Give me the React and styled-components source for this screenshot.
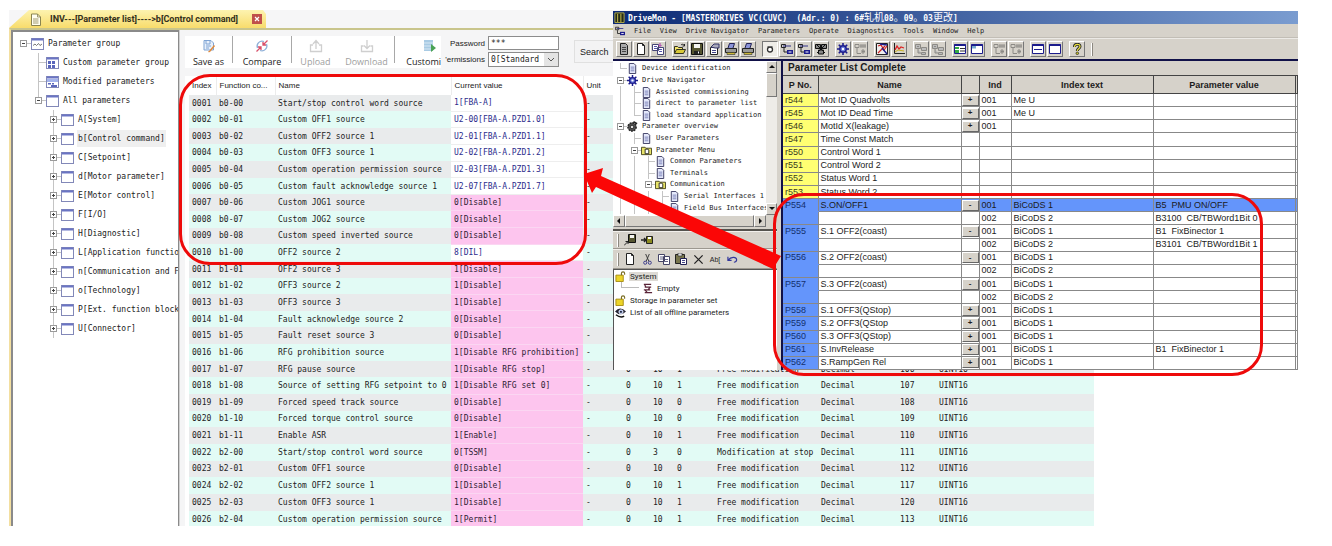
import React from "react";
import styled, { createGlobalStyle, css } from "styled-components";

const mono = `"DejaVu Sans Mono", "Liberation Mono", "Noto Sans CJK SC", monospace`;
const sans = `"Liberation Sans", Arial, sans-serif`;
const ui = `"Open Sans", "Noto Sans", sans-serif`;

const Global = createGlobalStyle`
  * { box-sizing: border-box; }
  body { margin: 0; background: #fff; color: #222; font-family: ${mono}; font-size: 8px; }
  button, input, select { font: inherit; color: inherit; margin: 0; padding: 0; border-radius: 0; }
  table { border-collapse: collapse; table-layout: fixed; width: 100%; height: 100%; }
  th, td { padding: 0; text-align: left; font-weight: normal; overflow: hidden; white-space: nowrap; }
  svg { display: block; flex: none; }
`;

const Page = styled.div`
  position: relative;
  display: flex;
  height: 100vh;
  min-height: 500px;
  min-width: 1100px;
  padding: 10px 238px 20px 9px;
`;

/* ---------- parameter list window ---------- */

const ListWindow = styled.section`
  flex: 1;
  min-width: 0;
  display: flex;
  flex-direction: column;
`;

const TabStrip = styled.header`
  display: flex;
  height: 18px;
  background: #f6f6f7;
`;

const Tab = styled.div`
  display: flex;
  align-items: center;
  width: 257px;
  height: 18px;
  padding-left: 21px;
  background: linear-gradient(#fdf3b0, #f8dc6c);
  clip-path: polygon(20px 0, 254px 0, 257px 4px, 257px 100%, 0 100%);
  font: bold 9px Roboto, ${ui};
  color: #33301c;
  white-space: nowrap;
`;

const TabTitle = styled.span`
  flex: 1;
  padding-left: 8px;
`;

const TabClose = styled.button`
  width: 10px;
  height: 10px;
  margin-right: 4px;
  border: 0;
  background: #c0504a;
  color: #fff;
  display: grid;
  place-items: center;
`;

const Body = styled.div`
  flex: 1;
  min-height: 0;
  display: flex;
  border-top: 2px solid #c9c58c;
  border-left: 2px solid #f3dfa0;
`;

const TreePanel = styled.nav`
  width: 168px;
  flex: none;
  overflow: hidden;
  padding: 2px 0 0 3px;
  border: solid #8a8a8a;
  border-width: 2px 1px 0 2px;
  background: #fff;
`;

const TreeRow = styled.div`
  display: flex;
  align-items: center;
  height: ${(p) => (p.$fill ? "100%" : "19px")};
  min-height: 0;
  white-space: nowrap;
`;

const TreeLabel = styled.span`
  margin-left: 3px;
  padding: 0 1px;
  line-height: ${(p) => (p.$tight ? "11px" : "17px")};
  background: ${(p) => (p.$on ? "#efefef" : "none")};
`;

const bars = {
  v: css`linear-gradient(#c4c4c4, #c4c4c4) 50% 0 / 1px 100% no-repeat`,
  h: css`linear-gradient(#c4c4c4, #c4c4c4) 100% 50% / 50% 1px no-repeat`,
  half: css`linear-gradient(#c4c4c4, #c4c4c4) 50% 0 / 1px 50% no-repeat`,
};

const Guide = styled.span`
  width: ${(p) => p.$w}px;
  align-self: stretch;
  flex: none;
  display: grid;
  place-items: center;
  background: ${(p) =>
    ({
      v: bars.v,
      b: css`${bars.v}, ${bars.h}`,
      "-": bars.h,
      "+": css`${bars.v}, ${bars.h}`,
      e: css`${bars.half}, ${bars.h}`,
      t: css`${bars.half}, ${bars.h}`,
    })[p.$kind] || "none"};
`;

const Expander = styled.button`
  width: 7px;
  height: 7px;
  border: 0;
  background: none;
`;

function Guides({ code, w }) {
  return [...code].map((c, i) => (
    <Guide key={i} $kind={c} $w={w}>
      {(c === "-" || c === "+" || c === "t") && (
        <Expander aria-label={c === "+" ? "Expand" : "Collapse"}>
          <svg width="7" height="7" viewBox="0 0 7 7">
            <rect x=".5" y=".5" width="6" height="6" fill="#fff" stroke="#9a9a9a" />
            <path d={c === "+" ? "M2 3.5h3M3.5 2v3" : "M2 3.5h3"} stroke="#444" />
          </svg>
        </Expander>
      )}
    </Guide>
  ));
}

function WindowIcon({ kind }) {
  return (
    <svg width="13" height="12" viewBox="0 0 13 12">
      <rect x=".5" y=".5" width="12" height="11" fill="#fff" stroke="#8288b8" />
      <path d="M1 1.5h11" stroke="#6a74c4" strokeWidth="2" />
      {kind === "wave" && <path d="M2 7.5l2-1.5 1.500 1.500 2-2 1.500 2 2-1.500" fill="none" stroke="#555" strokeWidth=".8" />}
      {kind === "grid" && <path d="M2 4h3v3H2zM6 4h3v3H6zM2 8h3v3H2zM6 8h3v3H6z" fill="#5a66bc" />}
      {kind === "form" && (
        <>
          <path d="M1 3h11v3H1z" fill="#a4b4ec" />
          <path d="M2 7h3v1.500H2zM6 7h2v1.500H6zM5 9h6v2H5z" fill="#5a66bc" />
        </>
      )}
    </svg>
  );
}

const Main = styled.div`
  flex: 1;
  min-width: 0;
  display: flex;
  flex-direction: column;
  padding-left: 5px;
  border-left: 1px solid #d0d0d0;
  background: #f5f5f6;
`;

const Toolbar = styled.div`
  display: flex;
  align-items: flex-start;
  height: 46px;
  padding-top: 6px;
`;

const ToolGroup = styled.div`
  display: flex;
  height: 32px;
  background: #fff;
  font: 9px ${ui};
`;

const Tool = styled.button`
  width: ${(p) => p.$w}px;
  height: 32px;
  display: flex;
  flex-direction: column;
  align-items: ${(p) => (p.$end ? "flex-end" : "center")};
  justify-content: space-between;
  padding-top: 3px;
  border: 0;
  background: none;
  color: ${(p) => (p.$off ? "#a0a0a0" : "#222")};
  line-height: 13px;
  white-space: nowrap;
`;

const Divider = styled.i`
  width: 1px;
  height: 27px;
  background: #a8a8a8;
`;

const Access = styled.form`
  display: grid;
  grid-template-columns: 41px 71px;
  grid-template-rows: 14px 15px;
  row-gap: 2px;
  column-gap: 3px;
  margin-left: 3px;
  align-items: center;
  label { font: 8px ${sans}; text-align: right; white-space: nowrap; }
`;

const PasswordBox = styled.input`
  width: 71px;
  height: 14px;
  padding-left: 2px;
  border: 1px solid #8c8c8c;
  background: #fff;
`;

const SelectWrap = styled.div`
  display: flex;
  height: 15px;
  border: 1px solid #8c8c8c;
  background: #fff;
  select { flex: 1; min-width: 0; appearance: none; border: 0; padding-left: 2px; background: none; }
  svg { width: 14px; height: 13px; background: #e4e4e4; }
`;

const SearchButton = styled.button`
  width: 90px;
  height: 23px;
  margin: 4px 0 0 15px;
  padding-left: 5px;
  border: 1px solid #e0e0e0;
  background: #f3f3f4;
  font: 9px ${sans};
  text-align: left;
`;

const TableArea = styled.div`
  flex: 1;
  min-height: 0;
  overflow: hidden;
  padding-left: 4px;
  background: #fff;
  table { height: calc(100% + 2px); }
`;

const HeadCell = styled.th`
  height: 19px;
  && { padding-left: 3px; }
  font: 8px ${sans};
  border-right: ${(p) => (p.$last ? 0 : "1px solid #ececec")};
`;

const ParamRow = styled.tr`
  background: ${(p) => (p.$alt ? "#e2fbf5" : "#e9ebec")};
  td { padding-left: 3px; line-height: 15px; }
`;

const ValueCell = styled.td`
  background: ${(p) => (p.$own ? "#fff" : "#fdc5ee")};
  color: ${(p) => (p.$own ? "#2c2c8c" : "#2e1c34")};
  border-bottom: 1px solid ${(p) => (p.$own ? "#eee" : "#fbd6f2")};
`;

const F = "Free modification";
const PARAMS = [
  ["b0-00", "Start/stop control word source", "1[FBA-A]", 1],
  ["b0-01", "Custom OFF1 source", "U2-00[FBA-A.PZD1.0]", 1],
  ["b0-02", "Custom OFF2 source 1", "U2-01[FBA-A.PZD1.1]", 1],
  ["b0-03", "Custom OFF3 source 1", "U2-02[FBA-A.PZD1.2]", 1],
  ["b0-04", "Custom operation permission source", "U2-03[FBA-A.PZD1.3]", 1],
  ["b0-05", "Custom fault acknowledge source 1", "U2-07[FBA-A.PZD1.7]", 1],
  ["b0-06", "Custom JOG1 source", "0[Disable]"],
  ["b0-07", "Custom JOG2 source", "0[Disable]"],
  ["b0-08", "Custom speed inverted source", "0[Disable]"],
  ["b1-00", "OFF2 source 2", "8[DIL]", 1],
  ["b1-01", "OFF2 source 3", "1[Disable]"],
  ["b1-02", "OFF3 source 2", "1[Disable]"],
  ["b1-03", "OFF3 source 3", "1[Disable]"],
  ["b1-04", "Fault acknowledge source 2", "0[Disable]"],
  ["b1-05", "Fault reset source 3", "0[Disable]"],
  ["b1-06", "RFG prohibition source", "1[Disable RFG prohibition]"],
  ["b1-07", "RFG pause source", "1[Disable RFG stop]", 0, ["0", "10", "1", F, "106"]],
  ["b1-08", "Source of setting RFG setpoint to 0", "1[Disable RFG set 0]", 0, ["0", "10", "1", F, "107"]],
  ["b1-09", "Forced speed track source", "0[Disable]", 0, ["0", "10", "0", F, "108"]],
  ["b1-10", "Forced torque control source", "0[Disable]", 0, ["0", "10", "0", F, "109"]],
  ["b1-11", "Enable ASR", "1[Enable]", 0, ["0", "10", "1", F, "110"]],
  ["b2-00", "Start/stop control word source", "0[TSSM]", 0, ["0", "3", "0", "Modification at stop", "111"]],
  ["b2-01", "Custom OFF1 source", "0[Disable]", 0, ["0", "10", "0", F, "112"]],
  ["b2-02", "Custom OFF2 source 1", "1[Disable]", 0, ["0", "10", "1", F, "117"]],
  ["b2-03", "Custom OFF3 source 1", "1[Disable]", 0, ["0", "10", "1", F, "120"]],
  ["b2-04", "Custom operation permission source", "1[Permit]", 0, ["0", "10", "1", F, "113"]],
];

const GROUPS = [
  ["-", "wave", "Parameter group"],
  [" b", "grid", "Custom parameter group"],
  [" b", "form", "Modified parameters"],
  [" t", "", "All parameters"],
  ["  +", "", "A[System]"],
  ["  +", "", "b[Control command]", true],
  ["  +", "", "C[Setpoint]"],
  ["  +", "", "d[Motor parameter]"],
  ["  +", "", "E[Motor control]"],
  ["  +", "", "F[I/O]"],
  ["  +", "", "H[Diagnostic]"],
  ["  +", "", "L[Application function]"],
  ["  +", "", "n[Communication and Fieldbus]"],
  ["  +", "", "o[Technology]"],
  ["  +", "", "P[Ext. function block]"],
  ["  +", "", "U[Connector]"],
];

const COLS = [27, 59, 176, 132, 40, 27, 24, 40, 104, 79, 39];

function ParameterList() {
  return (
    <ListWindow>
      <TabStrip>
        <Tab>
          <svg width="12" height="13" viewBox="0 0 12 13">
            <path d="M1.500 1h6l3 3v8.500h-9z" fill="#fffef0" stroke="#8a8450" />
            <path d="M7.500 1v3h3M3 6h5.500M3 8h5.500M3 10h5.500" fill="none" stroke="#8a8450" strokeWidth=".8" />
          </svg>
          <TabTitle>INV---[Parameter list]----&gt;b[Control command]</TabTitle>
          <TabClose aria-label="Close tab">
            <svg width="6" height="6" viewBox="0 0 6 6"><path d="M1 1l4 4M5 1L1 5" stroke="#fff" strokeWidth="1.200" /></svg>
          </TabClose>
        </Tab>
      </TabStrip>
      <Body>
        <TreePanel>
          {GROUPS.map(([code, icon, text, on]) => (
            <TreeRow key={text}>
              <Guides code={code} w={15} />
              <WindowIcon kind={icon} />
              <TreeLabel $on={on}>{text}</TreeLabel>
            </TreeRow>
          ))}
        </TreePanel>
        <Main>
          <Toolbar>
            <ToolGroup>
              <Tool $w={47}>
                <svg width="14" height="14" viewBox="0 0 14 14">
                  <path d="M2 1.500h7l2.500 2.500v7H2z" fill="#e8f0fb" stroke="#7fa4d4" />
                  <path d="M4 2v3h4V2M4 7h5M4 9h3" fill="none" stroke="#7fa4d4" />
                  <path d="M12.500 6.500L8 12l-1.500 1" stroke="#e08a3c" strokeWidth="1.500" fill="none" />
                </svg>
                Save as
              </Tool>
              <Divider />
              <Tool $w={58}>
                <svg width="14" height="14" viewBox="0 0 14 14" fill="none">
                  <path d="M2.500 9A5 5 0 0 1 9 2.500M11.500 5A5 5 0 0 1 5 11.500" stroke="#8fb0d8" strokeWidth="1.300" />
                  <path d="M12.500 1.500L8 6M8 3v3h3M1.500 12.500L6 8M3 8h3v3" stroke="#d8506a" strokeWidth="1.300" />
                </svg>
                Compare
              </Tool>
              <Divider />
              <Tool $w={47} $off disabled>
                <svg width="14" height="14" viewBox="0 0 14 14" fill="none" stroke="#cfcfcf" strokeWidth="1.300">
                  <path d="M4 6H1.500v6.500h11V6H10M7 10V2M4 5l3-3.500L10 5" />
                </svg>
                Upload
              </Tool>
              <Tool $w={55} $off disabled>
                <svg width="14" height="14" viewBox="0 0 14 14" fill="none" stroke="#cfcfcf" strokeWidth="1.300">
                  <path d="M3.500 7h-2v5.500h11V7h-2M7 1v8M4 6.500L7 9.500l3-3" />
                </svg>
                Download
              </Tool>
              <Divider />
              <Tool $w={46} $end>
                <svg width="18" height="14" viewBox="0 0 18 14">
                  <path d="M1 1h9v11H1z" fill="#a9cbe4" />
                  <path d="M1 4h9M1 7h9M1 10h9" stroke="#d8e8f4" />
                  <path d="M8 5l5 4-5 4z" fill="#4aa254" />
                </svg>
                Customi
              </Tool>
            </ToolGroup>
            <Access onSubmit={(e) => e.preventDefault()}>
              <label htmlFor="password">Password</label>
              <PasswordBox id="password" defaultValue="***" />
              <label htmlFor="permissions">'ermissions</label>
              <SelectWrap>
                <select id="permissions" defaultValue="0">
                  <option value="0">0[Standard</option>
                </select>
                <svg viewBox="0 0 14 13"><path d="M4 5l3 3 3-3" fill="none" stroke="#555" /></svg>
              </SelectWrap>
            </Access>
            <SearchButton>Search</SearchButton>
          </Toolbar>
          <TableArea>
            <table>
              <colgroup>
                {COLS.map((w, i) => <col key={i} style={{ width: w }} />)}
                <col />
              </colgroup>
              <thead>
                <tr>
                  <HeadCell>Index</HeadCell>
                  <HeadCell>Function co...</HeadCell>
                  <HeadCell>Name</HeadCell>
                  <HeadCell>Current value</HeadCell>
                  <HeadCell $last>Unit</HeadCell>
                  <HeadCell $last colSpan={7} />
                </tr>
              </thead>
              <tbody>
                {PARAMS.map(([code, name, value, own, more], i) => (
                  <ParamRow key={code} $alt={i % 2 === 1}>
                    <td>{String(i + 1).padStart(4, "0")}</td>
                    <td>{code}</td>
                    <td>{name}</td>
                    <ValueCell $own={!!own}>{value}</ValueCell>
                    <td>-</td>
                    {more ? (
                      <>
                        <td>{more[0]}</td>
                        <td>{more[1]}</td>
                        <td>{more[2]}</td>
                        <td>{more[3]}</td>
                        <td>Decimal</td>
                        <td>{more[4]}</td>
                        <td>UINT16</td>
                      </>
                    ) : (
                      <td colSpan={7} />
                    )}
                  </ParamRow>
                ))}
              </tbody>
            </table>
          </TableArea>
        </Main>
      </Body>
    </ListWindow>
  );
}

/* ---------- DriveMon window ---------- */

const face = "#d6d2ca";

const Drive = styled.section`
  position: absolute;
  left: 613px;
  right: 34px;
  top: 11px;
  height: 359px;
  display: flex;
  flex-direction: column;
  background: ${face};
  font-size: 7px;
  color: #1c1c1c;
`;

const TitleBar = styled.header`
  display: flex;
  align-items: center;
  gap: 3px;
  height: 13px;
  padding-left: 1px;
  background: linear-gradient(90deg, #0c2a74, #7a9cd0);
  color: #fff;
  font-size: 8px;
  font-weight: bold;
  line-height: 13px;
  white-space: pre;
`;

const Han = styled.span`
  font: 10px/13px "Noto Sans CJK SC", sans-serif;
`;

const MenuBar = styled.nav`
  display: flex;
  align-items: center;
  gap: 9px;
  height: 14px;
  padding-left: 2px;
  border-bottom: 1px solid #c2beb6;
`;

const MenuItem = styled.button`
  border: 0;
  background: none;
  white-space: nowrap;
`;

const IconBar = styled.div`
  display: flex;
  align-items: center;
  gap: 6px;
  height: 22px;
  padding-left: 3px;
  border-top: 1px solid #eceae6;
  border-bottom: 1px solid #111148;
`;

const IconGroup = styled.div`
  display: flex;
  gap: 1px;
`;

const IconButton = styled.button`
  width: 16px;
  height: 16px;
  display: grid;
  place-items: center;
  border: 1px solid;
  border-color: ${(p) => (p.$down ? "#777 #fff #fff #777" : "#fff #777 #777 #fff")};
  background: ${(p) => (p.$down ? "#efede8" : face)};
`;

const Split = styled.div`
  flex: 1;
  min-height: 0;
  display: flex;
  border-top: 1px solid #111148;
`;

const Side = styled.div`
  width: 164px;
  flex: none;
  display: flex;
  flex-direction: column;
`;

const NavArea = styled.div`
  display: flex;
  height: 154px;
  background: #fff;
`;

const NavTree = styled.div`
  flex: 1;
  min-width: 0;
  overflow: hidden;
  display: grid;
  grid-template-rows: repeat(13, 1fr);
  padding: 2px 0 1px;
`;

const VScroll = styled.div`
  width: 11px;
  display: flex;
  flex-direction: column;
  background: #eeece8;
`;

const HScroll = styled.div`
  display: flex;
  height: 12px;
  background: #eeece8;
`;

const ScrollPart = styled.button`
  width: ${(p) => p.$w || 11}px;
  height: ${(p) => p.$h || 12}px;
  flex: ${(p) => (p.$grow ? 1 : "none")};
  display: grid;
  place-items: center;
  border: 1px solid;
  border-color: #fff #777 #777 #fff;
  background: ${face};
`;

const Fill = styled.i`
  flex: 1;
`;

const Corner = styled.i`
  width: 11px;
  background: ${face};
`;

const EditBar = styled.div`
  display: flex;
  align-items: center;
  gap: ${(p) => p.$gap}px;
  height: ${(p) => p.$h}px;
  padding-left: 4px;
  border-top: 1px solid #f2f0ec;
  border-bottom: 1px solid #9c9890;
`;

const Grip = styled.i`
  width: 2px;
  height: 13px;
  border-left: 1px solid #fff;
  border-right: 1px solid #8c8880;
`;

const FlatButton = styled.button`
  border: 0;
  background: none;
  width: 12px;
  height: 12px;
  display: grid;
  place-items: center;
  font: 7px ${sans};
`;

const SideGap = styled.div`
  height: 4px;
  border-bottom: 2px solid #55534e;
`;

const Offline = styled.div`
  flex: 1;
  border-left: 1px solid #555;
  border-top: 1px solid #555;
  background: #fff;
  font: 8px Roboto, ${sans};
`;

const OfflineRow = styled.div`
  display: flex;
  align-items: center;
  gap: 3px;
  height: 12px;
  padding-left: ${(p) => (p.$sub ? 7 : 1)}px;
  white-space: nowrap;
`;

const OfflineLabel = styled.span`
  padding: 0 1px;
  background: ${(p) => (p.$on ? "#dddad4" : "none")};
`;

const Branch = styled.i`
  width: 18px;
  height: 6px;
  align-self: flex-start;
  border: solid #bbb;
  border-width: 0 0 1px 1px;
`;

const ListPane = styled.div`
  flex: 1;
  min-width: 0;
  display: flex;
  flex-direction: column;
  margin-left: 4px;
  border-left: 2px solid #111148;
`;

const ListTitle = styled.h2`
  margin: 0;
  height: 14px;
  padding-left: 5px;
  font: bold 10px/14px ${sans};
`;

const GridArea = styled.div`
  flex: 1;
  min-height: 0;
  font: 9px ${sans};
`;

const GridHead = styled.th`
  height: 18px;
  && { text-align: center; font-weight: bold; }
  background: ${face};
  border: 1px solid #444;
  border-left-width: ${(p) => (p.$first ? 0 : 1)}px;
`;

const GridRow = styled.tr`
  background: ${(p) => (p.$on ? "#6495fb" : "#fff")};
  height: 13px;
  td { padding-left: 2px; line-height: 11px; border-right: 1px solid #888; border-bottom: 1px solid #888; white-space: pre; }
`;

const NoCell = styled.td`
  background: ${(p) => (p.$ro ? "#ffff72" : "#6495fb")};
  color: ${(p) => (p.$ro ? "#3a3a1c" : "#14306e")};
  ${(p) => p.$open && css`&& { border-bottom-color: #6495fb; }`}
`;

const ToggleCell = styled.td`
  && { padding: 0; }
`;

const Toggle = styled.button`
  display: block;
  width: 100%;
  height: 11px;
  border: 1px solid;
  border-color: #fff #666 #666 #fff;
  background: ${face};
  font: bold 8px/8px ${sans};
`;

const navy = "#1c1c8c";
const ICONS = {
  doc: <><path d="M2.500 .5h5l2 2v9h-7z" fill="#fff" stroke="#222" /><path d="M4 4.500h4M4 6.500h4M4 8.500h4" stroke="#667" /></>,
  page: <><path d="M2.500 .5h5l2 2v9h-7z" fill="#fff" stroke="#222" /><path d="M7.500 .5v2h2" fill="none" stroke="#222" /></>,
  note: <><path d="M2.500 .5h5l2 2v9h-7z" fill="#e4e8fa" stroke="#33335c" /><path d="M4 4.500h4M4 6.500h4M4 8.500h4" stroke="#7880b8" /></>,
  grey: <><path d="M2.500 .5h5l2 2v9h-7z" fill="#aaa" stroke="#222" /><path d="M4 4.500h4M4 6.500h4M4 8.500h4" stroke="#444" /></>,
  copyset: <><path d="M.5 1.500h6v6h-6zM5.500 4.500h6v7h-6z" fill="#fff" stroke="#447" /><path d="M2 3.500h3M2 5.500h3M7 6.500h3M7 8.500h3" stroke="#55a" /><path d="M8 0v3M6.500 2l1.500 1.500L9.500 2" stroke="#a3a" fill="none" /></>,
  open: <><path d="M.5 10.500v-7h3l1 1h4v2" fill="#f4e46a" stroke="#332" /><path d="M.5 10.500l2-4h9l-2 4z" fill="#d8c838" stroke="#332" /><path d="M7 2c1-1 2-1 3.500.5M10.500 1v2h-2" stroke="#222" fill="none" /></>,
  save: <><path d="M.5 .5h11v11h-11z" fill="#555530" stroke="#111" /><path d="M3 1h6v4H3z" fill="#f4f4f0" /><path d="M3 8h6v3H3z" fill="#222" /><path d="M7 8.500h1v2H7z" fill="#fff" /></>,
  props: <><path d="M2.500 4.500h7v7h-7z" fill="#fff" stroke="#222" /><path d="M4 7.500h4M4 9.500h4" stroke="#448" /><path d="M3 4l3-3h5v4H7z" fill="#aab" stroke="#336" /></>,
  print: <><path d="M3 5l1.500-4.500h5L8 5" fill="#8c94d8" stroke="#225" /><path d="M.5 5.500h11v4h-11z" fill="#999" stroke="#222" /><path d="M2 9.500h8v2H2z" fill="#ccb838" stroke="#333" strokeWidth=".6" /></>,
  ring: <><circle cx="6" cy="6.500" r="2.500" fill="#fff" stroke="#333" strokeWidth="1.300" /><path d="M3.500 3.500h5" stroke="#666" /></>,
  link: <><path d="M.5 1.500h4v3h-4zM3 5v4h3" fill="none" stroke="#222" /><path d="M2 3h8" stroke="#338" /><path d="M6 7h6v4H6z" fill={navy} /><path d="M7.500 9h3" stroke="#fff" /></>,
  net: <><path d="M.5 1.500h5v4h-5zM6.500 1.500h5v4h-5zM3.500 7h5v4h-5z" fill="#888" stroke="#111" /><path d="M2 10l8-8M2 2l8 8" stroke="#111" /></>,
  gear: <><path d="M6 0v12M0 6h12M1.800 1.800l8.400 8.400M10.200 1.800L1.800 10.200" stroke={navy} strokeWidth="1.600" /><circle cx="6" cy="6" r="3.200" fill="#6878d8" stroke={navy} strokeWidth="1.400" /><circle cx="6" cy="6" r="1.200" fill="#fff" /></>,
  knob: <><circle cx="5.500" cy="6.500" r="4.500" fill="#555" stroke="#222" strokeDasharray="2 1" strokeWidth="1.600" /><circle cx="5.500" cy="6.500" r="2" fill="#ddd" stroke="#222" /><path d="M7 1l4 2" stroke="#222" strokeWidth="2" /></>,
  flow: <path d="M1 1.500h4v3H1zM3 4.500v6M7 1v4M9 1v4M11 1v4M6 3h6M8 8.500h3M3 10.500h4M8 7h2v3H8z" fill="none" stroke="#8c8a86" />,
  scope: <><path d="M.5 .5v11h11V.5z" fill="#eee" stroke="#222" /><path d="M2 10l7-7M2 3l3-1 3 5 3-4" stroke="#c22" fill="none" strokeWidth="1.200" /><path d="M6 5l5 6M4 1l7 1" stroke={navy} strokeWidth="1.400" /></>,
  trend: <><path d="M1.500 0v10.500H12" fill="none" stroke="#222" /><path d="M2 7l2-4 2 3 2-2 3 1" fill="none" stroke="#d22" strokeWidth="1.300" /><path d="M2 9l3-2 6 1" fill="none" stroke="#c8b020" /></>,
  dim: <path d="M.5 1.500h5v4h-5zM3 6v4h3M6.500 4.500h5v3h-5zM6.500 9.500h4v2h-4zM2 3.500h2" fill="#bbb" stroke="#8c8a86" />,
  table: <><path d="M.5 1.500h11v9H.5z" fill="#fff" stroke={navy} /><path d="M.5 1h11v2H.5z" fill={navy} /><path d="M1 4h4v2H1zM1 7h4v3H1z" fill="#3a4" /><path d="M6 5.500h5M6 8h5" stroke="#333" /></>,
  panel: <><path d="M.5 1.500h11v9H.5z" fill="#fff" stroke={navy} /><path d="M.5 1h11v2H.5z" fill={navy} /><path d="M1 3h4v2.500H1z" fill="#7ac" /></>,
  split: <><path d="M.5 1.500h11v9H.5z" fill="#fff" stroke={navy} /><path d="M.5 1h11v2H.5zM2 6h8v1H2z" fill={navy} /></>,
  blank: <><path d="M.5 1.500h11v9H.5z" fill="#fff" stroke={navy} /><path d="M.5 1h11v2H.5z" fill={navy} /></>,
  help: <><path d="M3.500 4C3.500 .5 9 .5 9 3.500 9 5.500 6.300 5.500 6.300 8" fill="none" stroke="#222" strokeWidth="3" /><path d="M3.500 4C3.500 .5 9 .5 9 3.500 9 5.500 6.300 5.500 6.300 8" fill="none" stroke="#e8e040" strokeWidth="1.300" /><circle cx="6.300" cy="10.300" r="1.300" fill="#c8c030" stroke="#222" strokeWidth=".7" /></>,
  folder: <><path d="M.5 10.500v-8h4l1 1h6v7z" fill="#e8e468" stroke="#44421c" /><path d="M4.500 4.500h3l1 1v4h-4z" fill="#fff" stroke="#222" /></>,
  download: <><path d="M4.500 .5h7v8h-7z" fill="#555530" stroke="#111" /><path d="M6 1h4v3H6z" fill="#f4f4f0" /><path d="M0 11.500l4-4M1.500 7.500H4V10" stroke="#222" fill="none" /></>,
  upload: <><path d="M5.500 2.500h6v7h-6z" fill="#8a8a20" stroke="#222" /><path d="M7 3h3v2H7z" fill="#fff" /><path d="M0 6h5M3 4l2 2-2 2" stroke="#222" strokeWidth="1.400" fill="none" /></>,
  cut: <><path d="M4 0l3.500 8M8 0L4.500 8" stroke="#333" /><circle cx="3.500" cy="9.500" r="1.700" fill="none" stroke="#338" /><circle cx="8.500" cy="9.500" r="1.700" fill="none" stroke="#338" /></>,
  copy: <><path d="M.5 1.500h6v7h-6zM5.500 3.500h6v8h-6z" fill="#fff" stroke="#446" /><path d="M2 4h3M2 6h3M7 6.500h3M7 8.500h3" stroke="#668" /></>,
  paste: <><path d="M.5 1.500h9v9h-9z" fill="#77754c" stroke="#222" /><path d="M3 0h4v3H3z" fill="#ddd" stroke="#222" strokeWidth=".6" /><path d="M5.500 5.500h6v6h-6z" fill="#fff" stroke="#225" /><path d="M7 7.500h3M7 9.500h3" stroke="#448" /></>,
  del: <path d="M1.500 1.500l9 9M10.500 1.500l-9 9" stroke="#222" strokeWidth="1.400" />,
  undo: <path d="M1 3v4h4M1.500 6.500C4 3 10 2.500 10.500 6c.2 2-1.500 3-3 3" fill="none" stroke="#33389c" strokeWidth="1.300" />,
  lock: <><path d="M1 4.500h8v7H1z" fill="#ecd428" stroke="#a48a10" /><path d="M7 4.500V2.500C7 .5 10.500 .5 10.500 2.500V4" fill="none" stroke="#776a20" strokeWidth="1.200" /></>,
  stack: <path d="M2 1.500h8M3 4.500h7M2 7.500h7M3 10.500h8M3 2l1 2M8.500 5L7 7M3.500 8l2 2" fill="none" stroke="#5a2438" strokeWidth="1.300" />,
  eye: <><path d="M0 5Q5.500-2 12 5Q6 11 0 5z" fill="#223" /><circle cx="6.500" cy="5.300" r="2.300" fill="#9ab0f0" stroke="#fff" strokeWidth=".8" /><circle cx="6.500" cy="5.300" r="1" fill="#000" /><path d="M1 8.500q5 4 9 1.500" fill="none" stroke="#111" strokeWidth="1.500" /></>,
  app: <><path d="M1 1h10v10.500H1z" fill="#222a18" stroke="#b8b048" /><path d="M4 2v9M7.500 2v9" stroke="#d8cc50" /></>,
};

const Icon = ({ name, size = 12 }) => (
  <svg width={size} height={size} viewBox="0 0 12 12">{ICONS[name]}</svg>
);

const ICON_GROUPS = [
  ["grey", "page", "copyset"],
  ["open", "save", "props", "print", "print"],
  ["ring", "link", "link", "net"],
  ["gear", "flow"],
  ["scope", "trend"],
  ["dim", "dim"],
  ["table", "panel"],
  ["flow", "flow"],
  ["split", "blank"],
  ["help"],
];

const NAV = [
  ["e", "note", "Device identification"],
  ["-", "gear", "Drive Navigator"],
  ["vb", "note", "Assisted commissioning"],
  ["vb", "note", "direct to parameter list"],
  ["ve", "note", "load standard application"],
  ["-", "knob", "Parameter overview"],
  ["vb", "note", "User Parameters"],
  ["v-", "folder", "Parameter Menu"],
  ["vvb", "note", "Common Parameters"],
  ["vvb", "note", "Terminals"],
  ["vv-", "folder", "Communication"],
  ["vvvb", "note", "Serial Interfaces 1"],
  ["vvvb", "note", "Field Bus Interfaces"],
];

const ROWS = [
  ["r544", "Mot ID Quadvolts", "+", "001", "Me U", ""],
  ["r545", "Mot ID Dead Time", "+", "001", "Me U", ""],
  ["r546", "MotId X(leakage)", "+", "001", "", ""],
  ["r547", "Time Const Match", "", "", "", ""],
  ["r550", "Control Word 1", "", "", "", ""],
  ["r551", "Control Word 2", "", "", "", ""],
  ["r552", "Status Word 1", "", "", "", ""],
  ["r553", "Status Word 2", "", "", "", ""],
  ["P554", "S.ON/OFF1", "-", "001", "BiCoDS 1", "B5  PMU ON/OFF"],
  ["", "", "", "002", "BiCoDS 2", "B3100  CB/TBWord1Bit 0"],
  ["P555", "S.1 OFF2(coast)", "-", "001", "BiCoDS 1", "B1  FixBinector 1"],
  ["", "", "", "002", "BiCoDS 2", "B3101  CB/TBWord1Bit 1"],
  ["P556", "S.2 OFF2(coast)", "-", "001", "BiCoDS 1", ""],
  ["", "", "", "002", "BiCoDS 2", ""],
  ["P557", "S.3 OFF2(coast)", "-", "001", "BiCoDS 1", ""],
  ["", "", "", "002", "BiCoDS 2", ""],
  ["P558", "S.1 OFF3(QStop)", "+", "001", "BiCoDS 1", ""],
  ["P559", "S.2 OFF3(QStop", "+", "001", "BiCoDS 1", ""],
  ["P560", "S.3 OFF3(QStop)", "+", "001", "BiCoDS 1", ""],
  ["P561", "S.InvRelease", "+", "001", "BiCoDS 1", "B1  FixBinector 1"],
  ["P562", "S.RampGen Rel", "+", "001", "BiCoDS 1", ""],
];

const arrows = { up: "M3 1L6 4H0z", down: "M0 1h6L3 4z", left: "M4 0v6L1 3z", right: "M2 0v6l3-3z" };
const Arrow = ({ to }) => (
  <svg width="6" height="6" viewBox="0 0 6 6"><path d={arrows[to]} fill="#111" /></svg>
);

function DriveMon() {
  return (
    <Drive>
      <TitleBar>
        <Icon name="app" size={11} />
        <span>
          {"DriveMon - [MASTERDRIVES VC(CUVC)  (Adr.: 0) : 6#"}
          <Han>轧机</Han>08<Han>。</Han>09<Han>。</Han>03<Han>更改</Han>]
        </span>
      </TitleBar>
      <MenuBar>
        <Icon name="link" size={10} />
        {["File", "View", "Drive Navigator", "Parameters", "Operate", "Diagnostics", "Tools", "Window", "Help"].map((m) => (
          <MenuItem key={m}>{m}</MenuItem>
        ))}
      </MenuBar>
      <IconBar>
        {ICON_GROUPS.map((g, i) => (
          <IconGroup key={i}>
            {g.map((n, j) => (
              <IconButton key={j} $down={n === "ring"} aria-label={n}><Icon name={n} /></IconButton>
            ))}
          </IconGroup>
        ))}
        <Grip />
      </IconBar>
      <Split>
        <Side>
          <NavArea>
            <NavTree>
              {NAV.map(([code, icon, text]) => (
                <TreeRow key={text} $fill>
                  <Guides code={code} w={14} />
                  <Icon name={icon} size={11} />
                  <TreeLabel $tight>{text}</TreeLabel>
                </TreeRow>
              ))}
            </NavTree>
            <VScroll>
              <ScrollPart aria-label="Scroll up"><Arrow to="up" /></ScrollPart>
              <ScrollPart $h={24} aria-label="Scroll position" />
              <Fill />
              <ScrollPart aria-label="Scroll down"><Arrow to="down" /></ScrollPart>
            </VScroll>
          </NavArea>
          <HScroll>
            <ScrollPart $w={12} aria-label="Scroll left"><Arrow to="left" /></ScrollPart>
            <ScrollPart $grow aria-label="Scroll position" />
            <ScrollPart $w={12} aria-label="Scroll right"><Arrow to="right" /></ScrollPart>
            <Corner />
          </HScroll>
          <SideGap />
          <EditBar $h={18} $gap={5}>
            <Grip />
            <FlatButton aria-label="Download"><Icon name="download" /></FlatButton>
            <FlatButton aria-label="Upload"><Icon name="upload" /></FlatButton>
          </EditBar>
          <EditBar $h={20} $gap={5}>
            <Grip />
            <FlatButton aria-label="New"><Icon name="page" /></FlatButton>
            <FlatButton aria-label="Cut"><Icon name="cut" size={11} /></FlatButton>
            <FlatButton aria-label="Copy"><Icon name="copy" /></FlatButton>
            <FlatButton aria-label="Paste"><Icon name="paste" /></FlatButton>
            <FlatButton aria-label="Delete"><Icon name="del" size={11} /></FlatButton>
            <FlatButton>Ab[</FlatButton>
            <FlatButton aria-label="Undo"><Icon name="undo" size={11} /></FlatButton>
          </EditBar>
          <Offline>
            <OfflineRow><Icon name="lock" size={11} /><OfflineLabel $on>System</OfflineLabel></OfflineRow>
            <OfflineRow $sub><Branch /><Icon name="stack" size={11} /><OfflineLabel>Empty</OfflineLabel></OfflineRow>
            <OfflineRow><Icon name="lock" size={11} /><OfflineLabel>Storage in parameter set</OfflineLabel></OfflineRow>
            <OfflineRow><Icon name="eye" size={11} /><OfflineLabel>List of all offline parameters</OfflineLabel></OfflineRow>
          </Offline>
        </Side>
        <ListPane>
          <ListTitle>Parameter List Complete</ListTitle>
          <GridArea>
            <table>
              <colgroup>
                {[35, 143, 18, 32, 142, 142].map((w, i) => <col key={i} style={{ width: w }} />)}
                <col />
              </colgroup>
              <thead>
                <tr>
                  <GridHead $first>P No.</GridHead>
                  <GridHead>Name</GridHead>
                  <GridHead />
                  <GridHead>Ind</GridHead>
                  <GridHead>Index text</GridHead>
                  <GridHead>Parameter value</GridHead>
                  <GridHead />
                </tr>
              </thead>
              <tbody>
                {ROWS.map(([no, name, sign, ind, text, value], i) => (
                  <GridRow key={i} $on={no === "P554"}>
                    <NoCell $ro={no[0] === "r"} $open={sign === "-"}>{no}</NoCell>
                    <td>{name}</td>
                    <ToggleCell>{sign && <Toggle>{sign}</Toggle>}</ToggleCell>
                    <td>{ind}</td>
                    <td>{text}</td>
                    <td>{value}</td>
                    <td />
                  </GridRow>
                ))}
              </tbody>
            </table>
          </GridArea>
        </ListPane>
      </Split>
    </Drive>
  );
}

/* ---------- callouts drawn over both windows ---------- */

const Callout = styled.div`
  position: absolute;
  left: ${(p) => p.$x}px;
  top: ${(p) => p.$y}px;
  width: ${(p) => p.$w}px;
  height: ${(p) => p.$h}px;
  border: 3px solid #ee0a0a;
  border-radius: 31px;
  pointer-events: none;
`;

const ArrowLayer = styled.svg`
  position: absolute;
  left: 583px;
  top: 166px;
  pointer-events: none;
`;

export default function App() {
  return (
    <>
      <Global />
      <Page>
        <ParameterList />
        <DriveMon />
        <Callout $x={179} $y={74} $w={408} $h={191} />
        <Callout $x={773} $y={193} $w={490} $h={183} />
        <ArrowLayer width="200" height="104" viewBox="583 166 200 104">
          <path d="M584 174L603 168L601 176L781 256L773 269L596 187L592 193Z" fill="#fb0606" />
        </ArrowLayer>
      </Page>
    </>
  );
}
